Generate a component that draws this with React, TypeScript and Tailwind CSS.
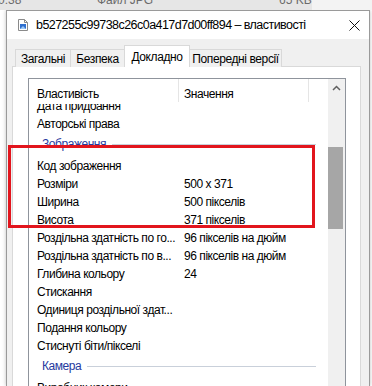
import React from "react"

const font = { fontFamily: '"Liberation Sans", Arial, sans-serif' }

type Row = { k: string; v?: string; group?: boolean }

const rows: Row[] = [
  { k: "Дата придбання" },
  { k: "Авторські права" },
  { k: "Зображення", group: true },
  { k: "Код зображення" },
  { k: "Розміри", v: "500 x 371" },
  { k: "Ширина", v: "500 пікселів" },
  { k: "Висота", v: "371 пікселів" },
  { k: "Роздільна здатність по го...", v: "96 пікселів на дюйм" },
  { k: "Роздільна здатність по в...", v: "96 пікселів на дюйм" },
  { k: "Глибина кольору", v: "24" },
  { k: "Стискання" },
  { k: "Одиниця роздільної здат..." },
  { k: "Подання кольору" },
  { k: "Стиснуті біти/пікселі" },
  { k: "Камера", group: true },
  { k: "Виробник камери" },
]

function FileIcon() {
  return (
    <svg width="10" height="12" viewBox="0 0 10 12" className="shrink-0">
      <path d="M0.5 0.5H6.5L9.5 3.5V11.5H0.5Z" fill="#fff" stroke="#8a8a8a" />
      <path d="M6.5 0.5V3.5H9.5" fill="none" stroke="#8a8a8a" />
      <rect x="2" y="5" width="6" height="5" fill="#2f6fcf" />
      <path d="M2 10L5 7L8 10Z" fill="#9cc8f5" />
    </svg>
  )
}

export default function App() {
  return (
    <div className="relative w-[372px] h-[386px] overflow-hidden bg-white text-black" style={font}>
      {/* explorer list behind the dialog */}
      <div className="h-[10px] w-[372px] flex overflow-hidden text-[12px] text-[#6b6b6b] leading-none whitespace-nowrap">
        <div className="w-[312px] bg-[#e6e6e6] relative">
          <span className="absolute left-[-2px] top-[-6px]">0:38</span>
          <span className="absolute left-[97px] top-[-6px]">Файл JPG</span>
          <span className="absolute left-[279px] top-[-6px]">65 KB</span>
        </div>
        <div className="flex-1 bg-[#f3f3f3]" />
      </div>

      {/* properties dialog */}
      <div className="ml-[6px] w-[364px] h-[376px] border-l border-r border-t border-[#9a9a9a] flex flex-col shadow-[0_0_4px_rgba(0,0,0,0.25)]">
        <div className="h-[28px] bg-white flex items-center pl-[11px] pr-[9px] shrink-0">
          <FileIcon />
          <span className="ml-[8px] text-[12.5px] tracking-[-0.55px] text-black">
            b527255c99738c26c0a417d7d00ff894 – властивості
          </span>
          <svg width="11" height="11" viewBox="0 0 11 11" className="ml-auto">
            <path d="M0.5 0.5L10.5 10.5M10.5 0.5L0.5 10.5" stroke="#111" strokeWidth="1" />
          </svg>
        </div>

        <div className="flex-1 bg-[#f0f0f0] pl-[5px] pr-[8px] pt-[6px] flex flex-col">
          {/* tabs */}
          <div className="flex items-end h-[22px] pl-[3px] text-[12px] tracking-[-0.4px] relative z-10">
            <div className="h-[18px] w-[55px] border-t border-l border-[#d9d9d9] bg-[#f0f0f0] flex items-center justify-center pt-[1px]">
              Загальні
            </div>
            <div className="h-[18px] w-[54px] border-t border-l border-[#d9d9d9] bg-[#f0f0f0] flex items-center justify-center pt-[1px]">
              Безпека
            </div>
            <div className="h-[22px] w-[66px] border-t border-l border-r border-[#d9d9d9] bg-white flex items-start justify-center pt-[2px]">
              Докладно
            </div>
            <div className="h-[18px] w-[92px] border-t border-r border-[#d9d9d9] bg-[#f0f0f0] flex items-center justify-center pt-[1px]">
              Попередні версії
            </div>
          </div>

          {/* tab panel */}
          <div className="-mt-px flex-1 bg-white border-l border-r border-t border-[#d9d9d9] pl-[15px] pt-[11px]">
            <div className="w-[318px] h-[400px] border-l border-r border-t border-[#8f949c] flex text-[12px] tracking-[-0.45px]">
              <div className="w-[299px] flex flex-col">
                <div className="h-[25px] flex shrink-0 bg-white relative z-10">
                  <div className="w-[150px] h-[23px] border-r border-[#e5e5e5] pl-[8px] pt-[6px]">Властивість</div>
                  <div className="w-[130px] h-[23px] border-r border-[#e5e5e5] pl-[5px] pt-[6px]">Значення</div>
                </div>
                <div className="flex-1 overflow-hidden">
                  <div className="-mt-[7px]">
                    {rows.map((r, i) =>
                      r.group ? (
                        <div key={i} className="h-[24px] flex items-center pl-[13px] pr-[12px] pb-[2px]">
                          <span className="text-[#263a9e]">{r.k}</span>
                          <div className="flex-1 ml-[6px] h-px bg-[#c9d0da]" />
                        </div>
                      ) : (
                        <div key={i} className="h-[18px] flex items-center whitespace-nowrap">
                          <div className="w-[155px] pl-[8px]">{r.k}</div>
                          <div>{r.v}</div>
                        </div>
                      )
                    )}
                  </div>
                </div>
              </div>
              {/* scrollbar */}
              <div className="w-[17px] bg-[#f0f0f0] flex flex-col">
                <div className="h-[17px] flex items-center justify-center">
                  <svg width="9" height="6" viewBox="0 0 9 6">
                    <path d="M1 5L4.5 1.5L8 5" fill="none" stroke="#606060" strokeWidth="1.5" />
                  </svg>
                </div>
                <div className="mt-[51px] h-[82px] w-[15px] bg-[#a6a6a6]" />
              </div>
            </div>
          </div>
        </div>
      </div>

      {/* red highlight frame */}
      <div className="absolute left-[8px] top-[145px] w-[307px] h-[83px] border-[3px] border-[#e2151d]" />
    </div>
  )
}
